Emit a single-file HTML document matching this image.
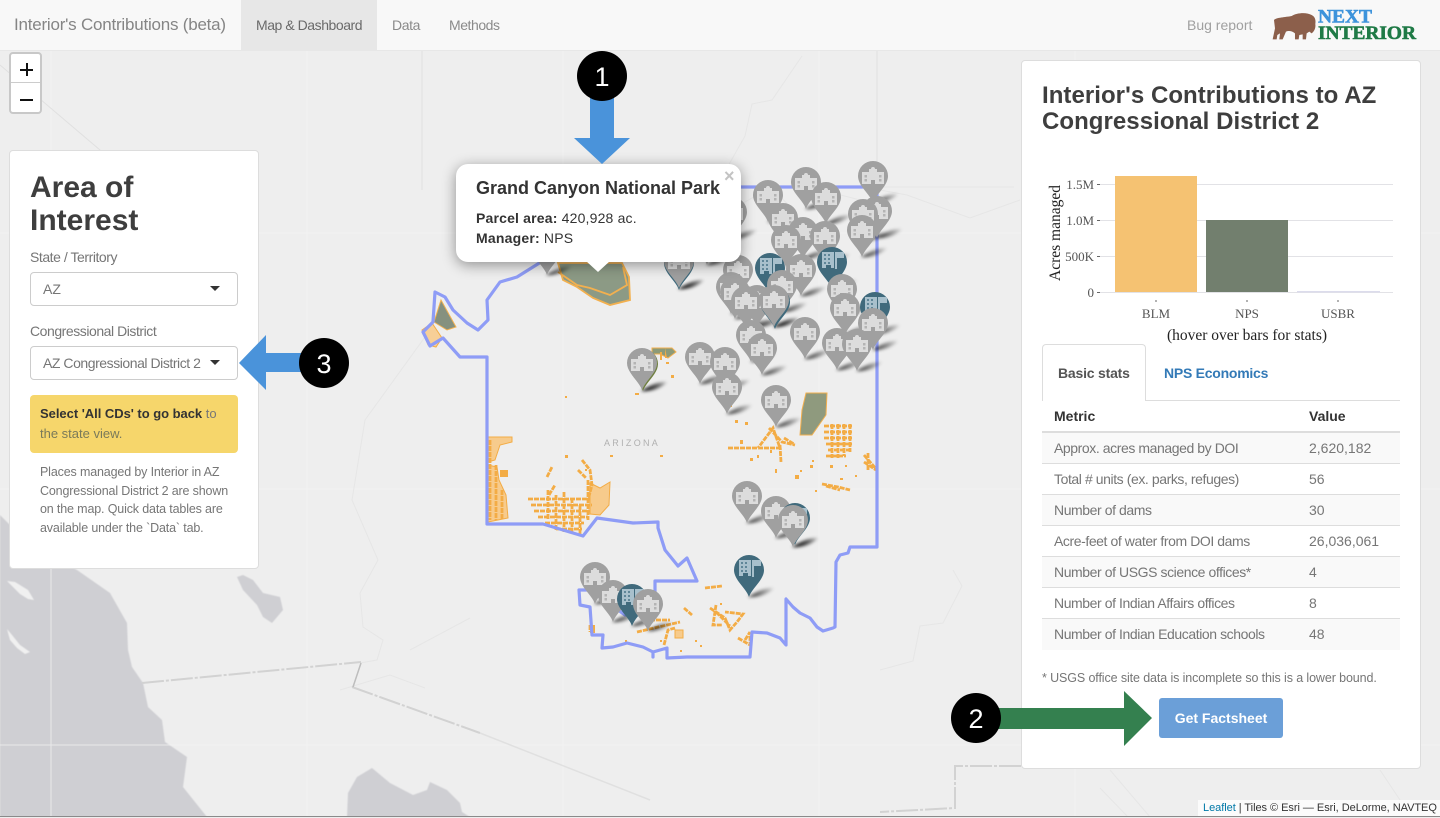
<!DOCTYPE html>
<html lang="en"><head><meta charset="utf-8"><title>Interior's Contributions</title>
<style>
html,body{margin:0;padding:0;width:1440px;height:817px;overflow:hidden;background:#eee;font-family:"Liberation Sans",sans-serif}
.t{position:absolute;white-space:nowrap;line-height:20px;height:20px}
.box{position:absolute;box-sizing:border-box}
#map{position:absolute;left:0;top:0}
.lt{color:#767676}
.m{font-size:14px;letter-spacing:-.42px;left:1054px}
.v{font-size:14px;left:1309px}
.row{position:absolute;left:1042px;width:358px;height:31px;box-sizing:border-box;border-bottom:1px solid #ddd}
.sel{position:absolute;left:30px;width:208px;height:34px;box-sizing:border-box;background:#fff;border:1px solid #ccc;border-radius:4px}
.car{position:absolute;width:0;height:0;border-left:5px solid transparent;border-right:5px solid transparent;border-top:5px solid #333}
</style></head><body>
<svg id="map" width="1440" height="817" viewBox="0 0 1440 817" xmlns="http://www.w3.org/2000/svg">
<defs>
<filter id="b" x="-20%" y="-20%" width="140%" height="140%"><feGaussianBlur stdDeviation="1.500"/></filter>
<filter id="b1" x="-5%" y="-5%" width="110%" height="110%"><feGaussianBlur stdDeviation=".6"/></filter>
<filter id="b2" x="-5%" y="-5%" width="110%" height="110%"><feGaussianBlur stdDeviation=".35"/></filter>
<linearGradient id="sg"><stop offset="0" stop-color="#000" stop-opacity=".85"/><stop offset="1" stop-color="#000" stop-opacity=".08"/></linearGradient>
<path id="pin" d="M0 0C-3-9-15-17-15-27A15 15 0 1 1 15-27C15-17 3-9 0 0Z"/>
<path id="s" d="M-1 0C5-3 12-9 25-9C21-4 10 1-1 0Z" fill="url(#sg)"/>
<g id="g"><use href="#pin" fill="#a0a0a0"/>
<path d="M-11-31H-4V-34H-2A2 2 0 0 1 2-34H4V-31H11V-19H2V-23H-2V-19H-11Z" fill="#dcdcdc"/>
<path d="M-8.500-28h2.500v2.500h-2.500zM-8.500-24h2.500v2.500h-2.500zM6-28h2.500v2.500h-2.500zM6-24h2.500v2.500h-2.500z" fill="#b4b4b4"/></g>
<g id="w"><use href="#pin" fill="#3f6a7c"/>
<path d="M-10-37H2V-21H-1V-24H-6V-21H-10ZM3-37H12V-31H5V-20H3Z" fill="#a8c0cc"/>
<path d="M-8-35h2v2h-2zM-4-35h2v2h-2zM-8-31h2v2h-2zM-4-31h2v2h-2zM-8-27h2v2h-2zM-4-27h2v2h-2z" fill="#5f8698"/></g>
</defs>
<rect width="1440" height="817" fill="#eeeeee"/>
<g filter="url(#b1)">
<path d="M0 515L30 545L77 570L110 593L127 623L128 650L132 667L143 683L148 707L162 720L165 742L187 757L183 787L207 817H0Z" fill="#cfcfd3"/>
<path d="M347 817L348 793L357 777L372 768L390 783L413 795L427 790L430 782L447 790L460 803L462 812L470 817Z" fill="#cfcfd3"/>
<path d="M237 577L243 575L253 580L263 593L280 597L283 610L272 623L263 617L257 605L243 590Z" fill="#cfcfd3"/>
<path d="M7 581L15 582L28 590L34 600L28 599L20 594ZM7 629L12 635L20 645L30 652L25 654L17 648L10 640Z" fill="#f0f0f0"/>
</g>
<g stroke="#f3f3f3" stroke-width="1" fill="none" opacity=".7">
<path d="M0 233H1021M0 489H1021M0 745H1440M1421 233H1440M1421 489H1440M51 50V817M307 50V817M563 50V817M819 50V817M1075 50V817"/></g>
<g fill="none" stroke="#e6e6e6" stroke-width="1">
<path d="M378 560L352 500L365 420L430 330L435 295M378 560L360 593L363 627L383 640L377 660L360 663"/>
<path d="M802 56L772 100L752 104L745 136L727 168L713 210M731 210L759 194L775 191L795 212M818 200L837 194L860 200"/>
<path d="M880 190L907 195L970 218L1020 200"/>
<path d="M880 670L913 661L920 626L943 623L962 586L953 570"/>
<path d="M340 690L390 675L425 688M410 650L470 618M1110 770L1150 817M1100 788L1128 817M1380 770L1400 800" /></g>
<g fill="none" stroke="#e0e0e0" stroke-width="1">
<path d="M0 65L100 150L258 350"/><path d="M422 50V190M877 50V187"/></g>
<path d="M1014 187H880" stroke="#e6e6e6" fill="none"/>
<g fill="none" stroke="#d2d2d2" stroke-width="2" stroke-dasharray="22 2 3 2" filter="url(#b2)">
<path d="M142 683L361 662"/><path d="M352 687L480 733"/><path d="M1021 766H955V808L880 812"/></g>
<path d="M480 733L650 800" stroke="#e0e0e0" stroke-width="1.500" fill="none"/>
<path d="M361 663L353 687" stroke="#bdbdbd" fill="none" stroke-width="1.500"/>
<!-- parcels -->
<g filter="url(#b2)">
<path d="M558 263L563 280L577 287L593 298L610 305L630 300L629 277L622 263Z" fill="#8c9a85" stroke="#f2b04f" stroke-width="1.800"/>
<path d="M558 272L577 285L590 288L610 295L627 285L623 267" fill="none" stroke="#f2b04f" stroke-width="1.800"/>
<path d="M806 393H827L826 415L812 435H800L802 410Z" fill="#8f9a7e" stroke="#f2b04f"/>
<path d="M652 348H672L676 352L668 358L660 354H652Z" fill="#8c9a78" stroke="#f2b04f"/>
<path d="M434 322L447 330L456 327L441 300Z" fill="#86917f" stroke="#f2b04f"/>
<path d="M488 437H512V442L500 445L495 460L488 462ZM488 465L497 467L499 480L506 495L508 518L488 522ZM590 483L600 488L610 482L609 505L600 515L590 514Z" fill="#f7cb8c" stroke="#f3ac45"/>
<path d="M422 330L432 323L442 338L436 347L428 345Z" fill="#f7cf97" stroke="#f3ac45"/>
<g fill="none" stroke="#f3ac45" stroke-width="2.800" stroke-dasharray="5 1">
<path d="M528 499H590M531 505H592M534 511H590M538 517H588M545 523H584M556 529H582"/>
<path d="M548 490V520M556 495V530M564 492V532M572 498V534M580 505V534M588 480V520"/>
<path d="M582 460L590 470L592 485L588 500M578 470L586 478M547 477L552 467M549 495L555 485"/>
<path d="M490 440V520M496 465V520M502 490V520"/>
<path d="M728 448H780L773 428L758 448M769 428L782 442L795 445M780 445L781 462M784 438L794 444"/>
<path d="M824 426H852M824 432H852M824 438H852M826 444H852M828 450H850M826 456H846M832 424V458M838 424V458M844 424V456M850 424V452"/>
<path d="M864 455L877 470M864 462L876 470M868 453V470"/>
<path d="M822 484L838 487L850 490M826 486L840 490"/>
<path d="M710 608L725 618L730 630L737 622L743 614L725 612M716 605L713 625L722 625M716 612L730 626"/>
<path d="M705 588L722 586M738 638L750 645V636M745 640L750 632"/>
<path d="M684 608L692 615M637 632L680 622M650 620L670 620M590 625V632M664 645L668 630L675 628"/>
</g>
<path d="M500 282L517 277L533 267M453 310L467 323L478 330L488 320" fill="none" stroke="#f2b04f" stroke-width="1.200"/>
<path d="M675 630h8v8h-8z" fill="#f7cb8c" stroke="#f3ac45"/>
<g fill="#f3ac45"><path d="M635 393h4v2h-4zM660 352h2v8h-2zM665 348l2 10h-2zM671 375h3v3h-3zM666 362h3v2h-3zM565 396h2v2h-2zM728 404h4v3h-4zM734 395h3v2h-3zM745 422h3v3h-3zM735 420h3v3h-3zM740 440h3v4h-3zM750 458h3v3h-3zM757 455h2v3h-2zM770 450h2v3h-2zM795 475h4v4h-4zM775 469h2v4h-2zM610 455h3v2h-3zM565 455h3v3h-3zM585 469h2v2h-2zM660 455h3v2h-3zM800 470h2v2h-2zM812 460h2v2h-2zM845 465h2v2h-2zM855 475h2v2h-2zM815 490h2v2h-2zM720 603h2v2h-2zM625 640h2v2h-2zM660 640h2v2h-2zM680 650h2v2h-2zM700 645h2v2h-2zM695 640h2v2h-2zM590 625h5v8h-5zM500 470h8v7h-8zM810 465h3v3h-3zM830 465h3v3h-3zM840 478h3v2h-3z"/></g>
</g>
<!-- district -->
<path d="M740 187H877V547H850L848 553L840 555L836 562L835 627L833 628L823 631L817 627L810 618L800 613L793 607L786 599V645L780 638L767 633L752 632L750 657H687L667 658V648L653 652V657L653 652L643 647L627 643L613 647L602 648L603 635L592 635L590 607L580 605L579 590L590 590L625 615L650 612L655 593V581H697L687 558L678 566L665 550L658 528V522L633 523L597 518L583 536L543 524H487V357H460L443 338L430 346L423 332L433 322L435 292L445 297L453 310L467 323L478 330L488 320L487 300L500 282L517 277L533 267L560 250L600 220L680 190Z" fill="none" stroke="#8e9cf6" stroke-width="3.200" stroke-linejoin="round"/>
<text x="604" y="446" font-size="9" fill="#b0b0b0" letter-spacing="2.300" font-family="Liberation Sans">ARIZONA</text>
<!-- shadows -->
<g filter="url(#b)">
<use href="#s" x="547" y="275"/><use href="#s" x="707" y="265"/><use href="#s" x="732" y="239"/><use href="#s" x="873" y="203"/><use href="#s" x="806" y="209"/><use href="#s" x="768" y="222"/><use href="#s" x="826" y="224"/><use href="#s" x="877" y="238"/><use href="#s" x="863" y="241"/><use href="#s" x="783" y="245"/><use href="#s" x="862" y="257"/><use href="#s" x="803" y="259"/><use href="#s" x="825" y="263"/><use href="#s" x="786" y="267"/><use href="#s" x="679" y="289"/><use href="#s" x="679" y="289"/><use href="#s" x="738" y="297"/><use href="#s" x="801" y="296"/><use href="#s" x="782" y="312"/><use href="#s" x="731" y="314"/><use href="#s" x="842" y="316"/><use href="#s" x="735" y="319"/><use href="#s" x="757" y="327"/><use href="#s" x="774" y="327"/><use href="#s" x="774" y="327"/><use href="#s" x="746" y="328"/><use href="#s" x="845" y="335"/><use href="#s" x="875" y="334"/><use href="#s" x="873" y="350"/><use href="#s" x="805" y="359"/><use href="#s" x="751" y="362"/><use href="#s" x="837" y="370"/><use href="#s" x="857" y="371"/><use href="#s" x="762" y="375"/><use href="#s" x="700" y="384"/><use href="#s" x="725" y="389"/><use href="#s" x="642" y="391"/><use href="#s" x="642" y="391"/><use href="#s" x="727" y="414"/><use href="#s" x="776" y="427"/><use href="#s" x="747" y="523"/><use href="#s" x="776" y="538"/><use href="#s" x="793" y="547"/><use href="#s" x="793" y="547"/><use href="#s" x="749" y="597"/><use href="#s" x="595" y="604"/><use href="#s" x="613" y="622"/><use href="#s" x="632" y="626"/><use href="#s" x="648" y="631"/><use href="#s" x="832" y="289"/><use href="#s" x="770" y="295"/>
</g>
<!-- markers -->
<g filter="url(#b2)">
<use href="#g" x="873" y="203"/><use href="#g" x="806" y="209"/><use href="#g" x="768" y="222"/><use href="#g" x="826" y="224"/><use href="#g" x="877" y="238"/><use href="#g" x="732" y="239"/><use href="#g" x="863" y="241"/><use href="#g" x="783" y="245"/><use href="#g" x="862" y="257"/><use href="#g" x="803" y="259"/><use href="#g" x="825" y="263"/><use href="#g" x="707" y="265"/><use href="#g" x="786" y="267"/><use href="#g" x="547" y="275"/><use href="#w" x="832" y="289"/><use href="#w" x="679" y="290"/><use href="#g" x="679" y="288"/><use href="#w" x="770" y="295"/><use href="#g" x="801" y="296"/><use href="#g" x="738" y="297"/><use href="#g" x="782" y="312"/><use href="#g" x="731" y="314"/><use href="#g" x="842" y="316"/><use href="#g" x="735" y="319"/><use href="#g" x="757" y="327"/><use href="#w" x="775" y="329"/><use href="#g" x="774" y="327"/><use href="#g" x="746" y="328"/><use href="#w" x="875" y="334"/><use href="#g" x="845" y="335"/><use href="#g" x="873" y="350"/><use href="#g" x="805" y="359"/><use href="#g" x="751" y="362"/><use href="#g" x="837" y="370"/><use href="#g" x="857" y="371"/><use href="#g" x="762" y="375"/><use href="#g" x="700" y="384"/><use href="#g" x="725" y="389"/><use href="#pin" x="643" y="391" fill="#6f8040"/><use href="#g" x="642" y="390"/><use href="#g" x="727" y="414"/><use href="#g" x="776" y="427"/><use href="#g" x="747" y="523"/><use href="#g" x="776" y="538"/><use href="#w" x="795" y="545"/><use href="#g" x="793" y="547"/><use href="#w" x="749" y="597"/><use href="#g" x="595" y="604"/><use href="#g" x="613" y="622"/><use href="#w" x="632" y="626"/><use href="#g" x="648" y="631"/>
</g>
<rect x="0" y="816" width="1440" height="1" fill="#8a8a8a"/>
</svg>

<!-- header -->
<div class="box" style="left:0;top:0;width:1440px;height:51px;background:#f8f8f8;border-bottom:1px solid #e7e7e7"></div>
<div class="box" style="left:241px;top:0;width:136px;height:50px;background:#e7e7e7"></div>
<div class="t" style="left:14px;top:15px;font-size:17px;color:#858585;letter-spacing:-.22px">Interior's Contributions (beta)</div>
<div class="t" style="left:256px;top:15px;font-size:14px;color:#6a6a6a;letter-spacing:-.45px">Map &amp; Dashboard</div>
<div class="t" style="left:392px;top:15px;font-size:14px;color:#8a8a8a;letter-spacing:-.4px">Data</div>
<div class="t" style="left:449px;top:15px;font-size:14px;color:#8a8a8a;letter-spacing:-.45px">Methods</div>
<div class="t" style="left:1187px;top:15px;font-size:14px;color:#a0a0a0">Bug report</div>
<svg class="box" style="left:1270px;top:6px" width="160" height="38" viewBox="1270 6 160 38">
<g transform="translate(1160 0) scale(.3333)"><path d="M342 60C350 52 375 52 395 48C410 38 440 36 455 45C465 50 468 60 466 72C468 85 462 95 455 100L448 95L440 100L438 118H428V103L418 105L416 118H405V100C395 92 385 92 378 95L368 118H358L360 100L352 105L350 118H338L345 85Z" fill="#8c5f4b"/></g>
<text x="1318" y="22.500" font-family="Liberation Serif" font-weight="bold" font-size="19" fill="#3d93db" stroke="#3d93db" stroke-width=".6" textLength="54" lengthAdjust="spacingAndGlyphs">NEXT</text>
<text x="1318" y="39" font-family="Liberation Serif" font-weight="bold" font-size="19" fill="#1f7a46" stroke="#1f7a46" stroke-width=".6" textLength="98" lengthAdjust="spacingAndGlyphs">INTERIOR</text>
</svg>

<!-- zoom -->
<div class="box" style="left:9px;top:52px;width:33px;height:62px;background:#fff;border:2px solid #c8c8c8;border-radius:4px"></div>
<div class="box" style="left:11px;top:82px;width:29px;height:1px;background:#ccc"></div>
<div class="box" style="left:20px;top:69px;width:13px;height:2px;background:#111"></div>
<div class="box" style="left:26px;top:63px;width:2px;height:13px;background:#111"></div>
<div class="box" style="left:20px;top:99px;width:13px;height:2px;background:#111"></div>

<!-- left panel -->
<div class="box" style="left:9px;top:150px;width:250px;height:419px;background:#fff;border:1px solid #ddd;border-radius:4px"></div>
<div class="t" style="left:30px;top:171px;font-size:30px;line-height:33px;height:66px;font-weight:bold;color:#3e3e3e">Area of<br>Interest</div>
<div class="t lt" style="left:30px;top:247px;font-size:14px;letter-spacing:-.45px">State / Territory</div>
<div class="sel" style="top:272px"></div>
<div class="t lt" style="left:43px;top:279px;font-size:14px">AZ</div>
<div class="car" style="left:210px;top:286px"></div>
<div class="t lt" style="left:30px;top:321px;font-size:14px;letter-spacing:-.45px">Congressional District</div>
<div class="sel" style="top:346px"></div>
<div class="t lt" style="left:43px;top:353px;font-size:14px;letter-spacing:-.45px">AZ Congressional District 2</div>
<div class="car" style="left:210px;top:360px"></div>
<div class="box" style="left:30px;top:395px;width:208px;height:58px;background:#f6d66b;border-radius:4px"></div>
<div class="t" style="left:40px;top:404px;font-size:13px;color:#333;letter-spacing:-.03px"><b>Select 'All CDs' to go back</b> <span style="color:#777">to</span></div>
<div class="t" style="left:40px;top:424px;font-size:13px;color:#7a7a5a">the state view.</div>
<div class="t lt" style="left:40px;top:462px;font-size:12.500px;letter-spacing:-.15px">Places managed by Interior in AZ</div>
<div class="t lt" style="left:40px;top:481px;font-size:12.500px;letter-spacing:-.15px">Congressional District 2 are shown</div>
<div class="t lt" style="left:40px;top:499px;font-size:12.500px;letter-spacing:-.15px">on the map. Quick data tables are</div>
<div class="t lt" style="left:40px;top:518px;font-size:12.500px;letter-spacing:-.15px">available under the `Data` tab.</div>

<!-- popup -->
<div class="box" style="left:456px;top:164px;width:285px;height:98px;background:#fff;border-radius:12px;box-shadow:0 3px 14px rgba(0,0,0,.4)"></div>
<svg class="box" style="left:580px;top:261px" width="40" height="12"><path d="M6 0L18 11L30 0Z" fill="#fff"/></svg>
<div class="t" style="left:476px;top:178px;font-size:18px;font-weight:bold;color:#333">Grand Canyon National Park</div>
<div class="t" style="left:476px;top:208px;font-size:14px;color:#333;letter-spacing:.18px"><b>Parcel area:</b> 420,928 ac.</div>
<div class="t" style="left:476px;top:228px;font-size:14px;color:#333;letter-spacing:.2px"><b>Manager:</b> NPS</div>
<div class="t" style="left:724px;top:166px;font-size:18px;font-weight:bold;color:#c3c3c3">×</div>

<!-- right panel -->
<div class="box" style="left:1021px;top:60px;width:400px;height:709px;background:#fff;border:1px solid #ddd;border-radius:4px"></div>
<div class="t" style="left:1042px;top:83px;font-size:24px;line-height:26px;height:52px;font-weight:bold;color:#3e3e3e;letter-spacing:.05px">Interior's Contributions to AZ<br>Congressional District 2</div>
<svg class="box" style="left:1030px;top:160px" width="380" height="190" viewBox="1030 160 380 190">
<g stroke="#e2e2e6" stroke-width="1"><path d="M1100 184.500H1393M1100 220.500H1393M1100 256.500H1393M1100 292.500H1393"/></g>
<rect x="1115" y="176" width="82" height="116" fill="#f5c272"/>
<rect x="1206" y="220" width="82" height="72" fill="#727f6e"/>
<rect x="1297" y="291" width="83" height="1.500" fill="#dcdcec"/>
<g stroke="#666" stroke-width="1"><path d="M1097 184.500H1100M1097 220.500H1100M1097 256.500H1100M1097 292.500H1100M1156 300V302M1247 300V302M1338 300V302"/></g>
<g font-family="Liberation Serif" font-size="13" fill="#555" text-anchor="end"><text x="1094" y="189">1.5M</text><text x="1094" y="225">1.0M</text><text x="1094" y="261">500K</text><text x="1094" y="297">0</text></g>
<g font-family="Liberation Serif" font-size="13" fill="#555" text-anchor="middle"><text x="1156" y="318">BLM</text><text x="1247" y="318">NPS</text><text x="1338" y="318">USBR</text></g>
<text x="1247" y="340" font-family="Liberation Serif" font-size="15.500" fill="#222" text-anchor="middle">(hover over bars for stats)</text>
<text transform="translate(1060 233) rotate(-90)" font-family="Liberation Serif" font-size="15.500" fill="#222" text-anchor="middle">Acres managed</text>
</svg>
<div class="box" style="left:1042px;top:344px;width:104px;height:57px;background:#fff;border:1px solid #ddd;border-bottom:0;border-radius:4px 4px 0 0;z-index:2"></div>
<div class="box" style="left:1042px;top:400px;width:358px;height:1px;background:#ddd"></div>
<div class="t" style="left:1058px;top:363px;font-size:14px;font-weight:bold;color:#555;z-index:3;letter-spacing:-.2px">Basic stats</div>
<div class="t" style="left:1164px;top:363px;font-size:14px;font-weight:bold;color:#337ab7;letter-spacing:-.25px">NPS Economics</div>
<div class="t" style="left:1054px;top:406px;font-size:14px;font-weight:bold;color:#333">Metric</div>
<div class="t" style="left:1309px;top:406px;font-size:14px;font-weight:bold;color:#333">Value</div>
<div class="box" style="left:1042px;top:431px;width:358px;height:2px;background:#ddd"></div>
<div class="row" style="top:433px;background:#f9f9f9"></div>
<div class="row" style="top:464px"></div>
<div class="row" style="top:495px;background:#f9f9f9"></div>
<div class="row" style="top:526px"></div>
<div class="row" style="top:557px;background:#f9f9f9"></div>
<div class="row" style="top:588px"></div>
<div class="row" style="top:619px;background:#f9f9f9;border-bottom:0"></div>
<div class="t lt m" style="top:438px">Approx. acres managed by DOI</div><div class="t lt v" style="top:438px">2,620,182</div>
<div class="t lt m" style="top:469px">Total # units (ex. parks, refuges)</div><div class="t lt v" style="top:469px">56</div>
<div class="t lt m" style="top:500px">Number of dams</div><div class="t lt v" style="top:500px">30</div>
<div class="t lt m" style="top:531px">Acre-feet of water from DOI dams</div><div class="t lt v" style="top:531px">26,036,061</div>
<div class="t lt m" style="top:562px">Number of USGS science offices*</div><div class="t lt v" style="top:562px">4</div>
<div class="t lt m" style="top:593px">Number of Indian Affairs offices</div><div class="t lt v" style="top:593px">8</div>
<div class="t lt m" style="top:624px">Number of Indian Education schools</div><div class="t lt v" style="top:624px">48</div>
<div class="t lt" style="left:1042px;top:668px;font-size:12.500px;letter-spacing:-.11px">* USGS office site data is incomplete so this is a lower bound.</div>
<div class="box" style="left:1159px;top:698px;width:124px;height:40px;background:#6b9fd8;border-radius:3px"></div>
<div class="t" style="left:1159px;width:124px;text-align:center;top:708px;font-size:14px;font-weight:bold;color:#fff">Get Factsheet</div>

<!-- attribution -->
<div class="box" style="left:1198px;top:800px;width:242px;height:16px;background:rgba(255,255,255,.75)"></div>
<div class="t" style="left:1203px;top:798px;font-size:11px;color:#333;letter-spacing:-.04px"><span style="color:#0078a8">Leaflet</span> | Tiles © Esri — Esri, DeLorme, NAVTEQ</div>

<!-- annotations -->
<svg class="box" style="left:0;top:0;z-index:5;pointer-events:none" width="1440" height="817">
<path d="M590 98H614V138H630L602 164L574 138H590Z" fill="#4a93da"/>
<circle cx="602" cy="76" r="25" fill="#000"/>
<text x="602" y="86" font-family="Liberation Sans" font-size="27" fill="#fff" text-anchor="middle">1</text>
<path d="M305 353H266V335L239 363L266 390V372H305Z" fill="#4a93da"/>
<circle cx="324" cy="363" r="25" fill="#000"/>
<text x="324" y="373" font-family="Liberation Sans" font-size="27" fill="#fff" text-anchor="middle">3</text>
<path d="M995 708H1124V691L1152 718L1124 746V729H995Z" fill="#34804f"/>
<circle cx="976" cy="718" r="25" fill="#000"/>
<text x="976" y="728" font-family="Liberation Sans" font-size="27" fill="#fff" text-anchor="middle">2</text>
</svg>
</body></html>
